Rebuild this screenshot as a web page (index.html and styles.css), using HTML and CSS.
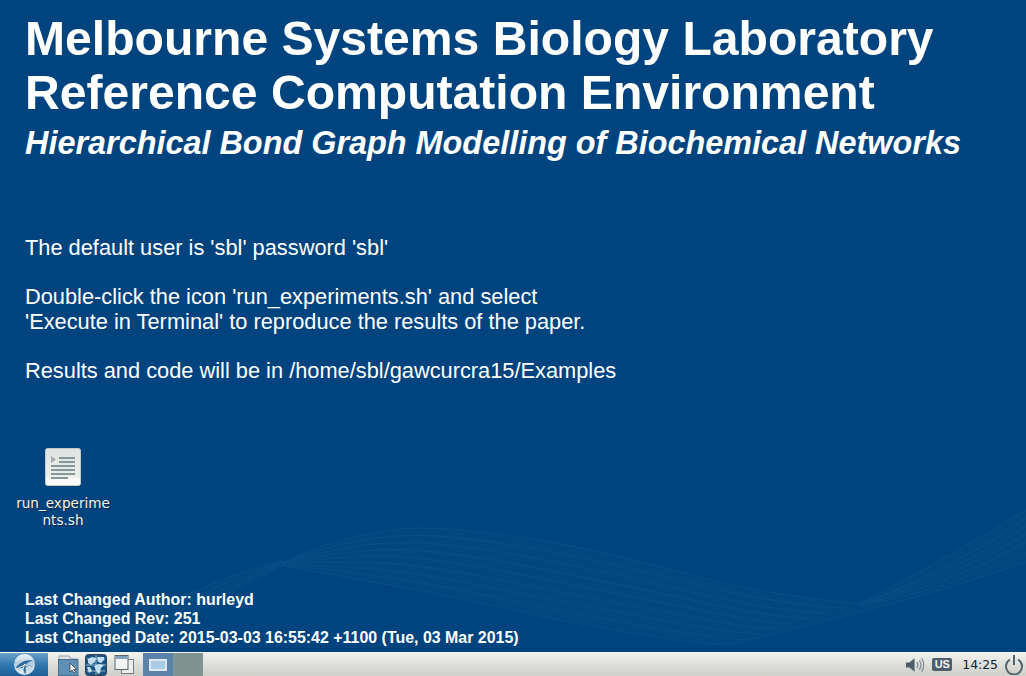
FILE: index.html
```html
<!DOCTYPE html>
<html lang="en">
<head>
<meta charset="utf-8">
<title>Desktop</title>
<link rel="stylesheet" href="styles.css">
</head>
<body>
<div class="screen">
  <main class="desktop">
    <svg class="wave" viewBox="0 0 1026 652" width="1026" height="652" fill="none" aria-hidden="true">
      <path d="M283 562C320 545 370 528 420 528C500 528 600 550 700 577C760 592 810 600 860 603L1026 510V562C920 600 800 627 732 645C722 645 712 644 700 643C600 632 470 600 400 587C360 580 320 572 283 566C240 585 180 620 130 652H70C150 610 230 572 283 562Z" fill="#02477f"/>
      <g class="strands">
        <path d="M283 562C320 545 370 528 420 528C500 528 600 550 700 577C760 592 810 600 860 603"/>
        <path d="M283 562.500C320 548.400 369 534.500 417.500 535.400C496 537 600 560.300 700 585.300C754 598.500 799 605.600 844 608.300"/>
        <path d="M283 563C320 551.800 367.500 541 415 542.800C492.500 546 600 570.500 700 593.500C748 605 788 611.300 828 613.500"/>
        <path d="M283 563.500C320 555.100 366 547.500 412.500 550.100C489 555 600 580.800 700 601.800C742 611.500 777 616.900 812 618.800"/>
        <path d="M283 564C320 558.500 365 554 410 557.500C485 564 600 591 700 610C736 618 766 622.500 796 624"/>
        <path d="M283 564.500C320 561.900 364 560.500 407.500 564.900C481 573 600 601.300 700 618.300C730 624.500 755 628.100 780 629.300"/>
        <path d="M283 565C320 565.300 362.500 567 405 572.300C477.500 582 600 611.500 700 626.500C724 631 744 633.800 764 634.500"/>
        <path d="M283 565.500C320 568.600 361 573.500 402.500 579.600C474 591 600 621.800 700 634.800C718 637.500 733 639.400 748 639.800"/>
        <path d="M283 566C320 572 360 580 400 587C470 600 600 632 700 643C712 644 722 645 732 645"/>
        <path d="M860 603C920 575 975 540 1026 510"/>
        <path d="M860 604C925 580 980 550 1026 518"/>
        <path d="M860 604C925 582 980 556 1026 526"/>
        <path d="M860 605C925 586 980 562 1026 534"/>
        <path d="M860 605C925 590 980 568 1026 542"/>
        <path d="M860 606C925 594 980 574 1026 552"/>
        <path d="M732 645C800 627 920 600 1026 562"/>
        <path d="M283 560C230 572 150 610 70 652"/>
        <path d="M283 561C234 575 160 615 85 652"/>
        <path d="M283 562C236 578 170 618 100 652"/>
        <path d="M283 564C238 581 175 620 115 652"/>
        <path d="M283 566C240 585 180 620 130 652"/>
      </g>
    </svg>
    <section class="intro">
      <h1 class="title">Melbourne Systems Biology Laboratory<br>Reference Computation Environment</h1>
      <h2 class="subtitle">Hierarchical Bond Graph Modelling of Biochemical Networks</h2>
      <div class="notes">
        <p>The default user is 'sbl' password 'sbl'</p>
        <p>Double-click the icon 'run_experiments.sh' and select<br>'Execute in Terminal' to reproduce the results of the paper.</p>
        <p>Results and code will be in /home/sbl/gawcurcra15/Examples</p>
      </div>
    </section>
    <div class="file">
      <svg class="file-icon" viewBox="0 0 36 38" width="36" height="38" aria-hidden="true">
        <defs>
          <linearGradient id="page" x1="0" y1="0" x2="0" y2="1">
            <stop offset="0" stop-color="#dfe3df"/><stop offset=".78" stop-color="#eceeea"/><stop offset=".82" stop-color="#f8f8f6"/><stop offset="1" stop-color="#ffffff"/>
          </linearGradient>
        </defs>
        <rect x=".5" y=".5" width="35" height="37" rx="2" fill="url(#page)" stroke="#c3c8c8"/>
        <path d="M6 8l5 3.500L6 15z" fill="#a3acaa"/>
        <g fill="#86979a">
          <rect x="14" y="9" width="16" height="2"/><rect x="14" y="13" width="16" height="2"/>
          <rect x="6" y="17" width="24" height="2"/><rect x="6" y="21" width="24" height="2"/>
          <rect x="6" y="25" width="24" height="2"/><rect x="6" y="29" width="17" height="2"/>
        </g>
      </svg>
      <span class="file-name">run_experime<br>nts.sh</span>
    </div>
    <footer class="revision">
      <div>Last Changed Author: hurleyd</div>
      <div>Last Changed Rev: 251</div>
      <div>Last Changed Date: 2015-03-03 16:55:42 +1100 (Tue, 03 Mar 2015)</div>
    </footer>
  </main>
  <nav class="taskbar">
    <div class="start">
      <svg viewBox="0 0 24 24" width="23" height="23" aria-hidden="true">
        <defs>
          <linearGradient id="orb" x1="0" y1="0" x2="0" y2="1">
            <stop offset="0" stop-color="#f4f7fa"/><stop offset=".45" stop-color="#b4cde0"/><stop offset="1" stop-color="#dbe7f0"/>
          </linearGradient>
        </defs>
        <circle cx="12" cy="12" r="11" fill="url(#orb)"/>
        <path d="M3 15C7 10 13 6 21 8c-3 .5-6 2-8 4 2.500 0 5 1 7 3-2.500-1-5-1-7-.5.5 2.500.5 5 0 8-1.500-2.500-2.500-5-3-7-2 .5-4 1-7-.5z" fill="#2f6c9c"/>
        <path d="M4 16.500L13 12M9 21l3-9M12 12l7 3" stroke="#f1f5f8" stroke-width="1" fill="none"/>
      </svg>
    </div>
    <div class="launchers">
      <svg viewBox="0 0 22 22" width="22" height="22" aria-hidden="true">
        <path d="M2 21V2h10l2 3h6v16z" fill="#dfe2e2" stroke="#98a3a8"/>
        <rect x="1.500" y="5.500" width="19.500" height="16" fill="#5e8fb5" stroke="#44708f"/>
        <path d="M13 9v9l2-2 2 3 1.500-1-2-2.500h3z" fill="#f4f4f4" stroke="#333" stroke-width=".7"/>
      </svg>
      <svg viewBox="0 0 22 22" width="22" height="22" aria-hidden="true">
        <rect x=".5" y=".5" width="21" height="21" rx="3" fill="#1b5382" stroke="#2e4258"/>
        <path d="M3 5l4-2 4 1-1 4-4 3-3-2zM12 3h7v3l-3 3-3-1zM9 12l5-2 5 1-3 3-1 5-2 1-2-4zM2 13l3 0 2 4-3 2z" fill="#bcdcf0"/>
        <path d="M1 11h20M11 1v20M2 5h18M2 17h18" stroke="#e4f0f7" stroke-width=".6"/>
      </svg>
      <svg viewBox="0 0 22 22" width="22" height="22" fill="none" aria-hidden="true">
        <rect x="8.500" y="5.500" width="12" height="14" fill="#eceeee" stroke="#747b7f"/>
        <rect x="2" y="1.500" width="13" height="14" fill="#f3f4f4" stroke="#5e666b"/>
        <rect x="2.500" y="2" width="12" height="3" fill="#7ea1bc"/>
      </svg>
    </div>
    <div class="pager">
      <div class="workspace workspace-active"><span class="mini-window"></span></div>
      <div class="workspace"></div>
    </div>
    <div class="tray">
      <svg viewBox="0 0 22 18" width="21" height="18" aria-hidden="true">
        <path d="M1 6.500h3.500L10 2v14l-5.500-4.500H1z" fill="#4e5d67"/>
        <path d="M12.500 6c1.200 1.800 1.200 4.200 0 6M15 4c2 3 2 7 0 10M17.500 2c2.800 4 2.800 10 0 14" fill="none" stroke="#7f8c93" stroke-width="1.300"/>
      </svg>
      <span class="layout">US</span>
      <time class="clock">14:25</time>
      <svg viewBox="0 0 20 20" width="20" height="20" fill="none" stroke="#53646f" stroke-width="2" aria-hidden="true">
        <path d="M6 4.500a8 8 0 1 0 8 0"/>
        <path d="M10 0v10"/>
      </svg>
    </div>
  </nav>
</div>
</body>
</html>
```
FILE: styles.css
```css
* { box-sizing: border-box; }
html, body { margin: 0; height: 100%; overflow: hidden; }
body { font-family: "Liberation Sans", Arial, sans-serif; background: #00447f; }
.screen { width: 1026px; height: 676px; display: flex; flex-direction: column; }

.desktop {
  position: relative;
  flex: 1;
  display: flex;
  flex-direction: column;
  background: #00447f;
  color: #fff;
  padding: 11px 0 5px 25px;
}
.wave { position: absolute; left: 0; top: 0; pointer-events: none; }
.strands path { stroke: #094e87; stroke-width: 1.100px; }
.intro, .file, .revision { position: relative; }

.title { margin: 0; font-size: 48.100px; line-height: 54px; font-weight: 700; }
.subtitle { margin: 6px 0 0; font-size: 32.400px; line-height: 36px; font-weight: 700; font-style: italic; }
.notes { margin-top: 74px; font-size: 21.800px; line-height: 25px; }
.notes p { margin: 0 0 24px; }

.file {
  width: 100px;
  margin: 41px 0 0 -12px;
  display: flex;
  flex-direction: column;
  align-items: center;
  gap: 9px;
}
.file-name {
  width: 100%;
  text-align: center;
  font: 13.600px/17px "DejaVu Sans", sans-serif;
  color: #f6f2e4;
  text-shadow: 1px 1px 1px #12294a;
}

.revision { margin-top: auto; font-size: 15.950px; line-height: 19px; font-weight: 700; }

.taskbar {
  height: 24px;
  display: flex;
  align-items: center;
  background: linear-gradient(#f2f2ef, #dcdcd8 55%, #cfcfca);
  border-top: 1px solid #f6f6f4;
}
.start {
  width: 48px;
  height: 100%;
  display: flex;
  align-items: center;
  justify-content: center;
  background: linear-gradient(#6aa0cb, #2f75ab 55%, #1b5f96);
}
.launchers { display: flex; align-items: center; gap: 6px; margin-left: 9px; }
.pager { display: flex; height: 100%; margin-left: 8px; }
.workspace { width: 30px; height: 100%; background: #7f9490; display: flex; align-items: center; justify-content: center; }
.workspace-active { background: #5b82a8; }
.mini-window { width: 18px; height: 12px; background: #a9cbe6; border: 2px solid #dfe8ef; }
.tray { margin-left: auto; display: flex; align-items: center; padding-right: 2px; }
.layout {
  margin-left: 6px;
  width: 20px;
  height: 13px;
  border-radius: 2px;
  background: #4d5e6e;
  color: #f2f4f5;
  font: 700 11px/13px "Liberation Sans", sans-serif;
  text-align: center;
}
.clock { margin: 0 6px 0 10px; font: 12.400px/16px "DejaVu Sans", sans-serif; color: #0e2233; }
```
